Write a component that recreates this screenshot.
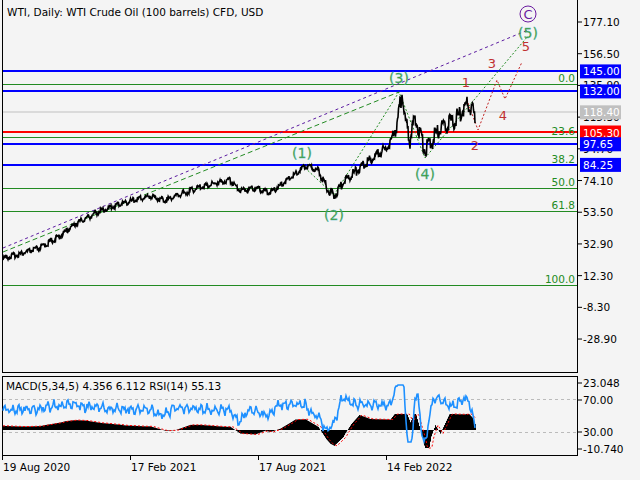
import React from "react";

const py = (p: number) => 22 + (177.1 - p) * 1.539;

function noise(i: number) {
  return Math.sin(i * 12.9898) * 43758.5453 % 1;
}

const anchors: [number, number][] = [
  [3, 258], [20, 254], [40, 248], [60, 236], [75, 224], [100, 211], [120, 204], [150, 196], [165, 200], [200, 187], [230, 180], [240, 190], [255, 188], [270, 193], [290, 178], [305, 166], [318, 170], [326, 186], [334, 196], [345, 180], [370, 160], [390, 145], [398, 120], [402, 92], [406, 125], [410, 140], [415, 118], [425, 150], [440, 130], [455, 120], [468, 103], [472, 108], [475, 118],
];

function interp(x: number) {
  if (x < 3) return 258 + (3 - x) * 0.3;
  for (let i = 0; i < anchors.length - 1; i++) {
    const [x0, y0] = anchors[i], [x1, y1] = anchors[i + 1];
    if (x >= x0 && x <= x1) return y0 + ((y1 - y0) * (x - x0)) / (x1 - x0);
  }
  return anchors[anchors.length - 1][1];
}

const pricePts: string[] = [];
for (let x = 3; x <= 475; x += 0.5) {
  const vol = x > 395 ? 9 : x > 320 ? 5 : 3;
  pricePts.push(`${x},${(interp(x) + noise(x * 2) * vol).toFixed(1)}`);
}

const rsiPts: string[] = [];
const histRects: React.ReactElement[] = [];
const sigPts: string[] = [];
for (let x = 3; x <= 475; x += 1) {
  const mom = interp(x - 8) - interp(x);
  const wig = Math.sin(x * 0.9) * 3 + Math.sin(x * 2.3) * 2 + noise(x * 3) * 2;
  const r = 412 - mom * 1.2 + wig;
  rsiPts.push(`${x},${Math.max(385, Math.min(442, r)).toFixed(1)}`);
  const m = (interp(x - 25) - interp(x)) * 0.55 + (x > 400 ? 3 : 0);
  const h = Math.max(-18, Math.min(16, m));
  const base = 430;
  histRects.push(<rect key={x} x={x} y={h >= 0 ? base - h : base} width={1} height={Math.abs(h)} fill="#000" />);
  const ms = (interp(x - 28) - interp(x - 3)) * 0.55 + (x > 400 ? 3 : 0);
  sigPts.push(`${x},${(base - Math.max(-18, Math.min(16, ms))).toFixed(1)}`);
}

const axis = [
  [177.1, "177.10"], [156.5, "156.50"], [135.9, "135.90"], [115.3, "115.30"], [94.7, "94.70"], [74.1, "74.10"], [53.5, "53.50"], [32.9, "32.90"], [12.3, "12.30"], [-8.3, "-8.30"], [-28.9, "-28.90"],
] as [number, string][];

const boxes: [number, string, string][] = [
  [145, "145.00", "#0000ff"], [132, "132.00", "#0000ff"], [118.4, "118.40", "#c0c0c0"], [105.3, "105.30", "#ff0000"], [97.65, "97.65", "#0000ff"], [84.25, "84.25", "#0000ff"],
];

const fib: [number, string][] = [[84, "0.0"], [137, "23.6"], [165, "38.2"], [188, "50.0"], [211, "61.8"], [285, "100.0"]];

export default function App() {
  const font = { fontFamily: '"DejaVu Sans", Verdana, sans-serif' };
  return (
    <div className="w-[640px] h-[480px] bg-[#f4f4f4] overflow-hidden" style={font}>
      <svg width={640} height={480} className="block" fontFamily='"DejaVu Sans", sans-serif'>
        <text x={7} y={16} fontSize={10.5} fill="#000">WTI, Daily:  WTI Crude Oil (100 barrels) CFD, USD</text>
        <line x1={2.5} y1={0} x2={2.5} y2={373} stroke="#000" />
        <line x1={577.5} y1={0} x2={577.5} y2={373} stroke="#000" />
        <line x1={2} y1={372.5} x2={578} y2={372.5} stroke="#000" />
        <rect x={2.5} y={376.5} width={575} height={79} fill="none" stroke="#000" />
        <line x1={3} x2={577} y1={112} y2={112} stroke="#c0c0c0" />
        {fib.map(([y]) => <line key={y} x1={3} x2={577} y1={y + 0.5} y2={y + 0.5} stroke="#228b22" />)}
        {[71, 91, 144, 165].map((y) => <line key={y} x1={3} x2={577} y1={y} y2={y} stroke="#0000ff" strokeWidth={2} />)}
        <line x1={3} x2={577} y1={132} y2={132} stroke="#ff0000" strokeWidth={2} />
        {fib.map(([y, t]) => <text key={t} x={575} y={y - 2} fontSize={10.5} fill="#228b22" textAnchor="end">{t}</text>)}
        <line x1={3} y1={248} x2={528} y2={30} stroke="#5a1aa0" strokeDasharray="3 3" />
        <line x1={3} y1={252} x2={399} y2={92} stroke="#228b22" strokeDasharray="5 3" />
        <polyline points="302,165 334,195 399,92 425,158 528,36" fill="none" stroke="#228b22" strokeDasharray="2 2" />
        <polyline points="468,103 478,130 497,80 505,99 522,62" fill="none" stroke="#c02020" strokeDasharray="2 2" />
        <polyline points={pricePts.join(" ")} fill="none" stroke="#000" strokeWidth={1.6} />
        {([[302, 158, "(1)"], [334, 220, "(2)"], [399, 83, "(3)"], [425, 179, "(4)"], [528, 38, "(5)"]] as [number, number, string][]).map(([x, y, t]) => (
          <text key={t} x={x} y={y} fontSize={14} fill="#4a9a2a" stroke="#3fb6c8" strokeWidth={0.3} textAnchor="middle">{t}</text>
        ))}
        <circle cx={528} cy={14} r={8} fill="none" stroke="#6a1aa0" />
        <text x={528} y={19} fontSize={13} fill="#6a1aa0" textAnchor="middle">C</text>
        {([[466, 87, "1"], [475, 150, "2"], [492, 68, "3"], [503, 120, "4"], [526, 51, "5"]] as [number, number, string][]).map(([x, y, t]) => (
          <text key={t} x={x} y={y} fontSize={13} fill="#c03030" textAnchor="middle">{t}</text>
        ))}
        {axis.map(([p, t]) => (
          <g key={t}>
            <line x1={578} x2={582} y1={py(p)} y2={py(p)} stroke="#000" />
            <text x={583} y={py(p) + 4} fontSize={10.5} fill="#000">{t}</text>
          </g>
        ))}
        {boxes.map(([p, t, c]) => (
          <g key={t}>
            <rect x={580} y={py(p) - 7} width={41} height={14} fill={c} />
            <text x={583} y={py(p) + 4} fontSize={10.5} fill="#fff">{t}</text>
          </g>
        ))}
        <line x1={3} x2={577} y1={399.5} y2={399.5} stroke="#bbb" strokeDasharray="3 3" />
        <line x1={3} x2={577} y1={432.5} y2={432.5} stroke="#bbb" strokeDasharray="3 3" />
        {histRects}
        <polyline points={sigPts.join(" ")} fill="none" stroke="#ff0000" strokeDasharray="2 2" />
        <polyline points={rsiPts.join(" ")} fill="none" stroke="#1e90ff" strokeWidth={1.6} />
        <text x={6} y={390} fontSize={10.5} fill="#000">MACD(5,34,5) 4.356 6.112 RSI(14) 55.13</text>
        {([[383, "23.048"], [400, "70.00"], [432, "30.00"], [449, "-10.740"]] as [number, string][]).map(([y, t]) => (
          <g key={t}>
            <line x1={578} x2={582} y1={y} y2={y} stroke="#000" />
            <text x={583} y={y + 4} fontSize={10.5} fill="#000">{t}</text>
          </g>
        ))}
        {([[2, "19 Aug 2020"], [130, "17 Feb 2021"], [258, "17 Aug 2021"], [386, "14 Feb 2022"]] as [number, string][]).map(([x, t]) => (
          <g key={t}>
            <line x1={x + 0.5} x2={x + 0.5} y1={456} y2={460} stroke="#000" />
            <text x={x + 1} y={471} fontSize={10.5} fill="#000">{t}</text>
          </g>
        ))}
      </svg>
    </div>
  );
}
